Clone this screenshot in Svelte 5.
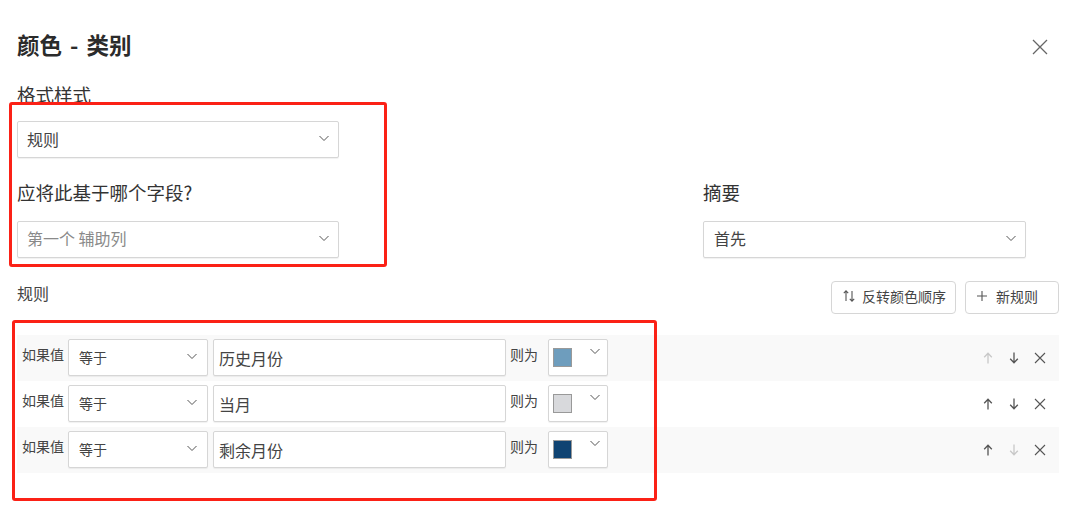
<script>
  const rules = [
    { value: '历史月份', color: '#6e9dbd', edge: '#999', up: false, down: true },
    { value: '当月', color: '#d8d9dc', edge: '#999', up: true, down: true },
    { value: '剩余月份', color: '#0f4372', edge: '#999', up: true, down: false }
  ];
</script>

{#snippet chevron()}
  <svg class="chev" width="12" height="12" viewBox="0 0 12 12"><path d="M1.500 4l4.500 4.500L10.500 4" fill="none" stroke="#555" stroke-width="1"/></svg>
{/snippet}

{#snippet arrow(dir, on)}
  <svg class="arrow" class:off={!on} width="14" height="14" viewBox="0 0 14 14">
    {#if dir === 'up'}
      <path d="M7 12.500V2.500M3.200 6.200L7 2.200l3.800 4" fill="none" stroke="currentColor" stroke-width="1.300"/>
    {:else}
      <path d="M7 1.500v10M3.200 7.800L7 11.800l3.800-4" fill="none" stroke="currentColor" stroke-width="1.300"/>
    {/if}
  </svg>
{/snippet}

<main class="dialog">
  <header class="head">
    <h1>颜色 - 类别</h1>
    <svg class="close" width="18" height="18" viewBox="0 0 18 18"><path d="M2 2l14 14M16 2L2 16" fill="none" stroke="#666" stroke-width="1.300"/></svg>
  </header>

  <div class="label first">格式样式</div>
  <div class="select wide"><span class="txt">规则</span>{@render chevron()}</div>

  <div class="columns">
    <div class="col">
      <div class="label">应将此基于哪个字段?</div>
      <div class="select wide"><span class="txt low muted">第一个 辅助列</span>{@render chevron()}</div>
    </div>
    <div class="col">
      <div class="label">摘要</div>
      <div class="select wide right"><span class="txt low">首先</span>{@render chevron()}</div>
    </div>
  </div>

  <div class="bar">
    <div class="rules-title">规则</div>
    <div class="buttons">
      <div class="btn reverse">
        <svg width="14" height="14" viewBox="0 0 14 14"><path d="M4 12V2M1.800 4.200L4 1.800l2.200 2.400M10 2v10M7.800 9.800L10 12.200l2.200-2.400" fill="none" stroke="#555" stroke-width="1.100"/></svg>
        <span>反转颜色顺序</span>
      </div>
      <div class="btn add">
        <svg width="12" height="12" viewBox="0 0 12 12"><path d="M6 1v10M1 6h10" fill="none" stroke="#555" stroke-width="1.100"/></svg>
        <span>新规则</span>
      </div>
    </div>
  </div>

  <div class="rows">
    {#each rules as r}
      <div class="row">
        <span class="tag if">如果值</span>
        <div class="select op"><span class="txt">等于</span>{@render chevron()}</div>
        <div class="input">{r.value}</div>
        <span class="tag then">则为</span>
        <div class="select swatch-select">
          <span class="swatch" style="background:{r.color};border-color:{r.edge}"></span>
          {@render chevron()}
        </div>
        <div class="actions">
          {@render arrow('up', r.up)}
          {@render arrow('down', r.down)}
          <svg width="14" height="14" viewBox="0 0 14 14"><path d="M2 2l10 10M12 2L2 12" fill="none" stroke="#555" stroke-width="1.100"/></svg>
        </div>
      </div>
    {/each}
  </div>

  <div class="mark mark-a"></div>
  <div class="mark mark-b"></div>
</main>

<style>
  :global(body) {
    margin: 0;
    background: #fff;
  }
  .dialog {
    position: relative;
    box-sizing: border-box;
    width: 1080px;
    height: 509px;
    padding: 29px 21px 0 17px;
    overflow: hidden;
    color: #333;
    font-family: "Noto Sans CJK SC", "Noto Sans", sans-serif;
  }
  .head {
    display: flex;
    justify-content: space-between;
    align-items: center;
    height: 32px;
  }
  h1 {
    margin: -2px 0 0;
    font-size: 22.500px;
    line-height: 32px;
    font-weight: 700;
    word-spacing: 3px;
    color: #2b2b2b;
  }
  .close {
    margin-right: 10px;
    margin-top: 3px;
  }
  .label {
    font-size: 18.500px;
    line-height: 26px;
    height: 26px;
    margin-bottom: 14px;
  }
  .label.first {
    margin-top: 20px;
    margin-bottom: 14px;
  }
  .select {
    box-sizing: border-box;
    display: flex;
    align-items: center;
    justify-content: space-between;
    height: 37px;
    background: #fff;
    border: 1px solid #d6d6d6;
    border-radius: 2px;
    box-shadow: 0 1px 1px rgba(0, 0, 0, 0.06);
    font-size: 16px;
    color: #444;
  }
  .txt {
    margin-top: -2px;
  }
  .txt.low {
    margin-top: -4px;
  }
  .wide {
    width: 322px;
    padding: 0 8px 0 9px;
  }
  .right {
    width: 323px;
    padding-left: 10px;
  }
  .muted {
    color: #8a8a8a;
  }
  .chev {
    flex: none;
    margin-top: -4px;
  }
  .columns {
    display: flex;
    gap: 364px;
    margin-top: 21px;
  }
  .col .label {
    margin-bottom: 16px;
  }
  .bar {
    display: flex;
    justify-content: space-between;
    align-items: flex-start;
    margin-top: 23px;
    height: 54px;
  }
  .rules-title {
    font-size: 16px;
    line-height: 22px;
    margin-top: 1px;
    color: #444;
  }
  .buttons {
    display: flex;
    gap: 9px;
  }
  .btn {
    box-sizing: border-box;
    display: flex;
    align-items: center;
    height: 33px;
    padding-bottom: 3px;
    border: 1px solid #d6d6d6;
    border-radius: 4px;
    font-size: 14px;
    color: #444;
  }
  .reverse {
    width: 125px;
    padding-left: 10px;
    gap: 6px;
  }
  .add {
    width: 94px;
    padding-left: 10px;
    gap: 8px;
  }
  .rows {
    display: flex;
    flex-direction: column;
  }
  .row {
    display: flex;
    align-items: center;
    height: 46px;
    padding: 0 0 1px 5px;
    box-sizing: border-box;
  }
  .row:nth-child(odd) {
    background: #f9f9f9;
  }
  .tag {
    font-size: 14px;
    line-height: 20px;
    color: #444;
    margin-top: -7px;
  }
  .if {
    width: 46px;
    flex: none;
  }
  .op {
    width: 140px;
    padding: 0 9px 0 10px;
    font-size: 14px;
    flex: none;
  }
  .input {
    box-sizing: border-box;
    width: 293px;
    height: 37px;
    margin-left: 5px;
    padding: 0 5px;
    flex: none;
    background: #fff;
    border: 1px solid #d6d6d6;
    border-radius: 2px;
    box-shadow: 0 1px 1px rgba(0, 0, 0, 0.06);
    font-size: 16px;
    line-height: 36px;
    color: #444;
  }
  .then {
    width: 38px;
    margin-left: 4px;
    flex: none;
  }
  .swatch-select {
    width: 60px;
    padding: 0 6px 0 4px;
    flex: none;
    align-items: flex-start;
  }
  .swatch {
    box-sizing: border-box;
    width: 19px;
    height: 19px;
    margin-top: 8px;
    border: 1px solid;
  }
  .swatch-select .chev {
    margin-top: 5px;
  }
  .actions {
    display: flex;
    align-items: center;
    gap: 12px;
    margin-left: auto;
    padding-right: 12px;
    color: #555;
  }
  .arrow.off {
    color: #c8c8c8;
  }
  .mark {
    position: absolute;
    box-sizing: border-box;
    border: 3px solid #fb2116;
    border-radius: 3px;
    pointer-events: none;
  }
  .mark-a {
    left: 9px;
    top: 102px;
    width: 378px;
    height: 165px;
  }
  .mark-b {
    left: 12px;
    top: 320px;
    width: 645px;
    height: 181px;
  }
</style>
